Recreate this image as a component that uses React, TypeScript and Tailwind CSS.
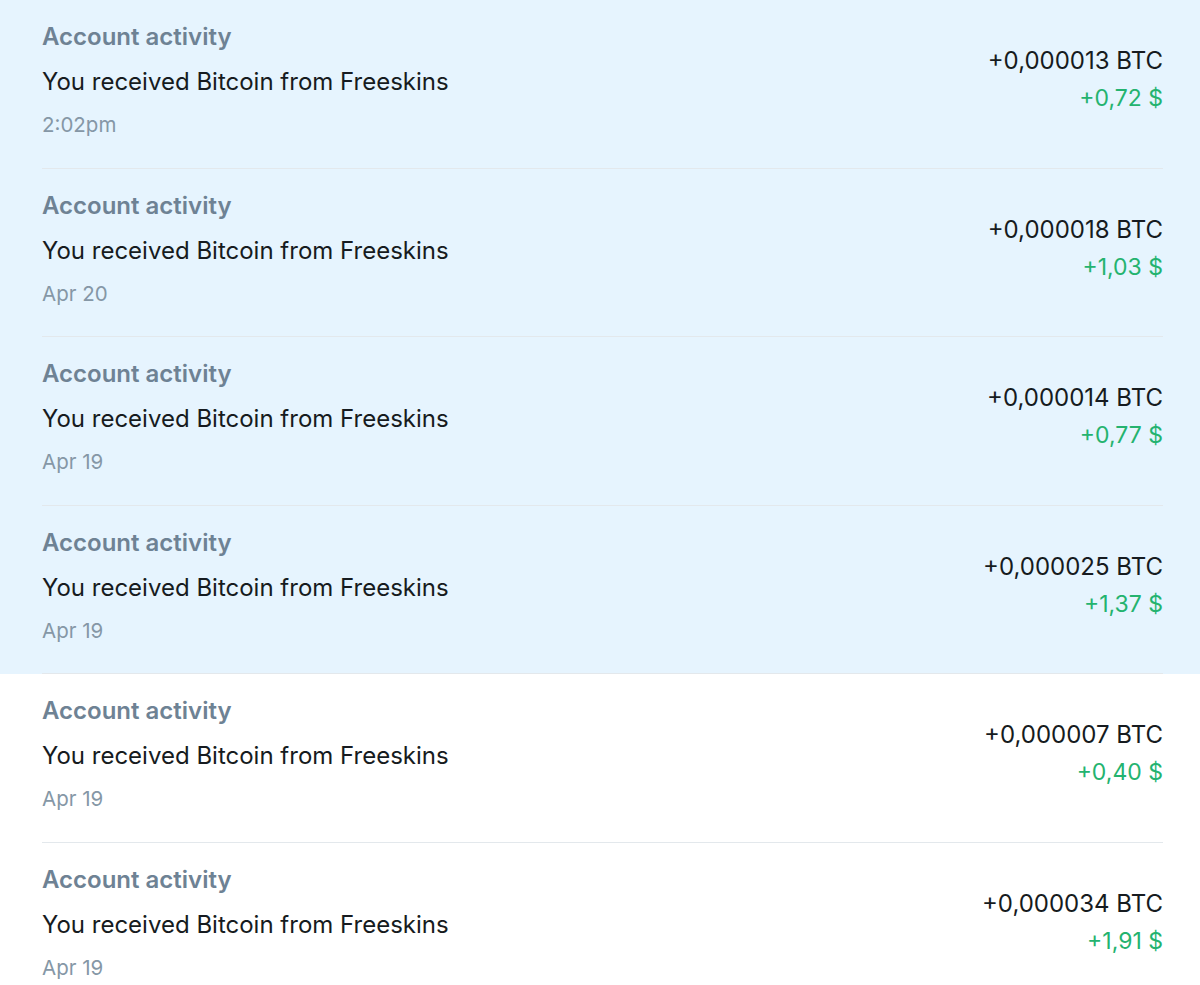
const rows = [
  { when: '2:02pm', btc: '+0,000013 BTC', usd: '+0,72 $', unread: true },
  { when: 'Apr 20', btc: '+0,000018 BTC', usd: '+1,03 $', unread: true },
  { when: 'Apr 19', btc: '+0,000014 BTC', usd: '+0,77 $', unread: true },
  { when: 'Apr 19', btc: '+0,000025 BTC', usd: '+1,37 $', unread: true },
  { when: 'Apr 19', btc: '+0,000007 BTC', usd: '+0,40 $', unread: false },
  { when: 'Apr 19', btc: '+0,000034 BTC', usd: '+1,91 $', unread: false },
];

export default function App() {
  return (
    <div className="min-h-screen w-full bg-white" style={{ fontFamily: 'Inter, "Noto Sans", sans-serif' }}>
      {rows.map((r, i) => (
        <div key={i} className={r.unread ? 'bg-[#e6f4fe]' : 'bg-white'}>
          <div className="ml-[42px] mr-[37px] h-[168.5px] flex items-start justify-between border-b border-[#e3e8ec]">
            <div className="flex flex-col pt-[22px]">
              <div className="text-[24px] leading-[30px] font-semibold text-[#6e8294]">Account activity</div>
              <div className="text-[24px] leading-[30px] mt-[15px] text-[#161b20]">You received Bitcoin from Freeskins</div>
              <div className="text-[20.5px] leading-[26px] mt-[15px] text-[#8597a6]">{r.when}</div>
            </div>
            <div className="flex flex-col items-end pt-[46px]">
              <div className="text-[24px] leading-[30px] text-[#161b20]">{r.btc}</div>
              <div className="text-[23px] leading-[30px] mt-[7px] text-[#24b36f]">{r.usd}</div>
            </div>
          </div>
        </div>
      ))}
    </div>
  );
}
